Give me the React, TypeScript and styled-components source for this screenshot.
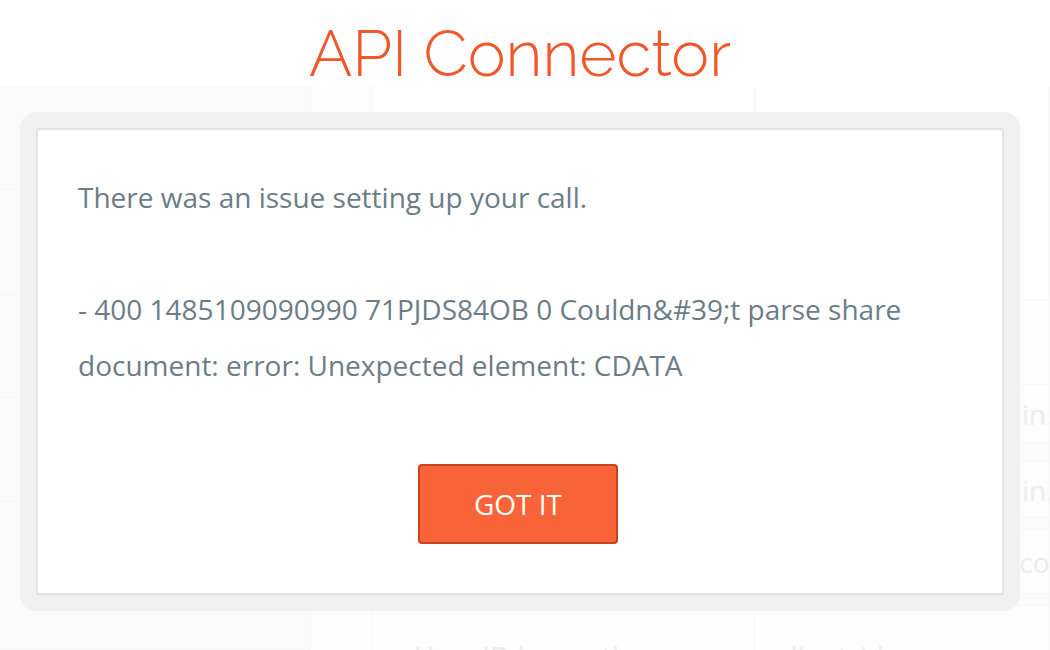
import React from "react";
import styled, { createGlobalStyle } from "styled-components";

const GlobalStyle = createGlobalStyle`
  html, body { margin: 0; padding: 0; background: #ffffff; }
  body { font-family: "Open Sans", "Liberation Sans", sans-serif; overflow: hidden; }
  * { box-sizing: border-box; }
`;

const Page = styled.div`
  position: relative;
  width: 1050px;
  height: 650px;
  overflow: hidden;
  background: #ffffff;
`;

/* faint application behind the modal */
const Backdrop = styled.div`
  display: flex;
  flex-direction: column;
  height: 100%;
  padding-top: 86px;
`;

const Workspace = styled.div`
  display: flex;
  flex: 1;
`;

const Sidebar = styled.div`
  width: 310px;
  display: flex;
  flex-direction: column;
  background: #fbfbfb;
`;

const SideRow = styled.div<{ $h: number }>`
  height: ${(p) => p.$h}px;
  flex-shrink: 0;
  border-bottom: 1px solid #f5f5f5;
`;

const Gutter = styled.div`
  width: 62px;
  background: #fdfdfd;
  border-left: 1px solid #f6f6f6;
  border-right: 1px solid #f6f6f6;
`;

const Main = styled.div`
  flex: 1;
  display: flex;
  flex-direction: column;
`;

const MainRow = styled.div<{ $h: number; $bg?: string }>`
  height: ${(p) => p.$h}px;
  flex-shrink: 0;
  display: grid;
  grid-template-columns: 383px 1fr;
  background: ${(p) => p.$bg || "#fdfdfd"};
  border-bottom: 1px solid #f6f6f6;
`;

const Cell = styled.div<{ $pad?: number }>`
  display: flex;
  align-items: center;
  padding-left: ${(p) => p.$pad ?? 42}px;
  font-family: "Open Sans", sans-serif;
  font-size: 28px;
  color: #ececec;
  white-space: nowrap;
  overflow: hidden;
  border-right: 1px solid #f6f6f6;
`;

/* modal layer */
const Overlay = styled.div`
  position: absolute;
  inset: 0;
  display: flex;
  flex-direction: column;
  align-items: center;
  padding: 0 30px 0 20px;
`;

const Title = styled.h1`
  margin: 0;
  height: 112px;
  padding-top: 14px;
  font-family: "Raleway", "Lato", "Open Sans", sans-serif;
  font-weight: 300;
  font-size: 64px;
  line-height: 80px;
  color: #f0572b;
`;

const Frame = styled.div`
  width: 1000px;
  padding: 16px;
  border-radius: 16px;
  background: #f1f1f1;
`;

const Dialog = styled.div`
  background: #ffffff;
  border: 2px solid #dfe4e8;
  border-radius: 3px;
  padding: 39px 40px 49px;
  display: flex;
  flex-direction: column;
`;

const Message = styled.p`
  margin: 0;
  font-family: "Open Sans", "Liberation Sans", sans-serif;
  font-size: 28px;
  line-height: 56px;
  color: #6b7d86;
`;

const Actions = styled.div`
  display: flex;
  justify-content: center;
  margin-top: 71px;
  padding-right: 4px;
`;

const Button = styled.button`
  width: 200px;
  height: 80px;
  border: 2px solid #c9441e;
  border-radius: 4px;
  background: #f96338;
  color: #ffffff;
  font-family: "Open Sans", "Liberation Sans", sans-serif;
  font-size: 28px;
  cursor: pointer;
  padding: 0;
`;

export default function App() {
  return (
    <Page>
      <GlobalStyle />
      <Backdrop>
        <Workspace>
          <Sidebar>
            <SideRow $h={104} />
            <SideRow $h={105} />
            <SideRow $h={103} />
            <SideRow $h={104} />
            <SideRow $h={148} />
          </Sidebar>
          <Gutter />
          <Main>
            <MainRow $h={214} $bg="#fefefe">
              <Cell />
              <Cell />
            </MainRow>
            <MainRow $h={85}>
              <Cell />
              <Cell />
            </MainRow>
            <MainRow $h={58}>
              <Cell />
              <Cell $pad={267}>in.</Cell>
            </MainRow>
            <MainRow $h={19} $bg="#fbfbfb">
              <Cell />
              <Cell />
            </MainRow>
            <MainRow $h={56}>
              <Cell />
              <Cell $pad={267}>in.</Cell>
            </MainRow>
            <MainRow $h={12} $bg="#fbfbfb">
              <Cell />
              <Cell />
            </MainRow>
            <MainRow $h={64}>
              <Cell />
              <Cell $pad={257}>.co</Cell>
            </MainRow>
            <MainRow $h={12} $bg="#fbfbfb">
              <Cell />
              <Cell />
            </MainRow>
            <MainRow $h={100} $bg="#fdfdfd">
              <Cell>User ID key path</Cell>
              <Cell $pad={22}>client_id</Cell>
            </MainRow>
          </Main>
        </Workspace>
      </Backdrop>
      <Overlay>
        <Title>API Connector</Title>
        <Frame>
          <Dialog>
            <Message>
              There was an issue setting up your call.
              <br />
              <br />
              - 400 1485109090990 71PJDS84OB 0 Couldn&amp;#39;t parse share
              document: error: Unexpected element: CDATA
            </Message>
            <Actions>
              <Button>GOT IT</Button>
            </Actions>
          </Dialog>
        </Frame>
      </Overlay>
    </Page>
  );
}
